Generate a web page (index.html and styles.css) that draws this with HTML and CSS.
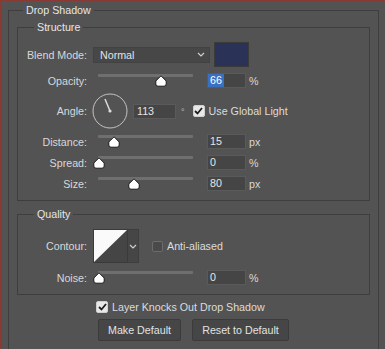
FILE: index.html
```html
<!DOCTYPE html>
<html lang="en">
<head>
    <meta charset="UTF-8">
    <meta name="viewport" content="width=device-width, initial-scale=1.0">
    <title>Layer Style - Drop Shadow</title>
    <link rel="stylesheet" href="styles.css">
</head>
<body>
    <fieldset class="grupo">
        <legend>Drop Shadow</legend>

        <fieldset class="secao estrutura">
            <legend>Structure</legend>

            <div class="linha linha-blend">
                <span class="rotulo">Blend Mode:</span>
                <div class="select">
                    <span>Normal</span>
                    <svg width="8" height="5" viewBox="0 0 8 5"><polyline points="1,1 4,4 7,1" fill="none" stroke="#cfcfcf" stroke-width="1.2"/></svg>
                </div>
                <div class="cor"></div>
            </div>

            <div class="linha linha-slider">
                <span class="rotulo">Opacity:</span>
                <div class="slider">
                    <div class="trilho"></div>
                    <svg class="pino" style="left: 62px" width="12" height="12" viewBox="0 0 12 12"><path d="M6 0.8 L11.2 6 V9 Q11.2 11.2 9 11.2 H3 Q0.8 11.2 0.8 9 V6 Z" fill="#fff" stroke="#1a1a1a"/></svg>
                </div>
                <div class="campo"><span class="selecionado">66</span></div>
                <span class="unidade">%</span>
            </div>

            <div class="linha linha-angulo">
                <span class="rotulo">Angle:</span>
                <svg class="dial" width="36" height="36" viewBox="0 0 36 36">
                    <circle cx="18" cy="18" r="17" fill="none" stroke="#c4c4c4" stroke-width="1"/>
                    <line x1="18" y1="18" x2="13" y2="6" stroke="#dcdcdc" stroke-width="1.5"/>
                    <circle cx="18" cy="18" r="1.6" fill="#dcdcdc"/>
                </svg>
                <div class="campo campo-angulo">113</div>
                <span class="grau">&deg;</span>
                <span class="check marcado">
                    <svg width="9" height="8" viewBox="0 0 9 8"><polyline points="1,4 3.5,6.5 8,1" fill="none" stroke="#1e1e1e" stroke-width="1.8"/></svg>
                </span>
                <span class="texto-check">Use Global Light</span>
            </div>

            <div class="linha linha-slider linha-distancia">
                <span class="rotulo">Distance:</span>
                <div class="slider">
                    <div class="trilho"></div>
                    <svg class="pino" style="left: 15px" width="12" height="12" viewBox="0 0 12 12"><path d="M6 0.8 L11.2 6 V9 Q11.2 11.2 9 11.2 H3 Q0.8 11.2 0.8 9 V6 Z" fill="#fff" stroke="#1a1a1a"/></svg>
                </div>
                <div class="campo">15</div>
                <span class="unidade">px</span>
            </div>

            <div class="linha linha-slider">
                <span class="rotulo">Spread:</span>
                <div class="slider">
                    <div class="trilho"></div>
                    <svg class="pino" style="left: 0px" width="12" height="12" viewBox="0 0 12 12"><path d="M6 0.8 L11.2 6 V9 Q11.2 11.2 9 11.2 H3 Q0.8 11.2 0.8 9 V6 Z" fill="#fff" stroke="#1a1a1a"/></svg>
                </div>
                <div class="campo">0</div>
                <span class="unidade">%</span>
            </div>

            <div class="linha linha-slider">
                <span class="rotulo">Size:</span>
                <div class="slider">
                    <div class="trilho"></div>
                    <svg class="pino" style="left: 35px" width="12" height="12" viewBox="0 0 12 12"><path d="M6 0.8 L11.2 6 V9 Q11.2 11.2 9 11.2 H3 Q0.8 11.2 0.8 9 V6 Z" fill="#fff" stroke="#1a1a1a"/></svg>
                </div>
                <div class="campo">80</div>
                <span class="unidade">px</span>
            </div>
        </fieldset>

        <fieldset class="secao qualidade">
            <legend>Quality</legend>

            <div class="linha linha-contorno">
                <span class="rotulo">Contour:</span>
                <svg class="contorno" width="35" height="34" viewBox="0 0 35 34">
                    <rect x="0" y="0" width="35" height="34" fill="#454545"/>
                    <polygon points="0,0 35,0 0,34" fill="#fafafa"/>
                </svg>
                <div class="contorno-menu">
                    <svg width="8" height="5" viewBox="0 0 8 5"><polyline points="1,1 4,4 7,1" fill="none" stroke="#cfcfcf" stroke-width="1.2"/></svg>
                </div>
                <span class="check"></span>
                <span class="texto-check">Anti-aliased</span>
            </div>

            <div class="linha linha-slider">
                <span class="rotulo">Noise:</span>
                <div class="slider">
                    <div class="trilho"></div>
                    <svg class="pino" style="left: 0px" width="12" height="12" viewBox="0 0 12 12"><path d="M6 0.8 L11.2 6 V9 Q11.2 11.2 9 11.2 H3 Q0.8 11.2 0.8 9 V6 Z" fill="#fff" stroke="#1a1a1a"/></svg>
                </div>
                <div class="campo">0</div>
                <span class="unidade">%</span>
            </div>
        </fieldset>

        <div class="linha-knock">
            <span class="check marcado">
                <svg width="9" height="8" viewBox="0 0 9 8"><polyline points="1,4 3.5,6.5 8,1" fill="none" stroke="#1e1e1e" stroke-width="1.8"/></svg>
            </span>
            <span class="texto-check">Layer Knocks Out Drop Shadow</span>
        </div>

        <div class="botoes">
            <button class="botao botao-make">Make Default</button>
            <button class="botao botao-reset">Reset to Default</button>
        </div>
    </fieldset>
</body>
</html>
```

FILE: styles.css
```css
*{
    margin: 0;
    padding: 0;
    box-sizing: border-box;
}
body{
    background-color: #535353;
    color: #d8d8d8;
    font-family: "Liberation Sans", Arial, sans-serif;
    font-size: 10.7px;
    height: 349px;
    overflow: hidden;
    border-top: 1px solid #8a3a35;
    border-left: 2px solid #8a3a35;
}
fieldset{
    border: 1px solid #3e3e3e;
}
legend{
    line-height: 13px;
    padding: 0 3px;
    color: #e6e6e6;
}
.grupo{
    margin: 3px 6px 0 6px;
    padding: 4px 8px 0 8px;
    height: 345px;
    border-bottom: none;
}
.grupo > legend{
    margin-left: 6px;
}
.secao{
    padding: 0 8px 6px 8px;
}
.secao > legend{
    margin-left: 8px;
}
.qualidade{
    margin-top: 7px;
}

/* linhas */
.linha{
    display: flex;
    align-items: center;
}
.rotulo{
    width: 61px;
    margin-right: 6px;
    text-align: right;
    white-space: nowrap;
}
.linha-blend{
    margin-top: 8px;
    height: 25px;
}
.linha-slider{
    height: 21px;
}
.estrutura .linha-slider{
    margin-top: 3px;
}
.estrutura .linha-distancia{
    margin-top: 2px;
}
.estrutura .linha-distancia ~ .linha-slider{
    margin-top: 0;
}
.linha-angulo{
    margin-top: 2px;
    height: 36px;
}
.linha-contorno{
    margin-top: 8px;
    height: 34px;
}
.qualidade .linha-slider{
    margin-top: 4px;
}

/* blend */
.select{
    width: 117px;
    height: 16px;
    background-color: #474747;
    border: 1px solid #424242;
    display: flex;
    align-items: center;
    justify-content: space-between;
    padding: 0 4px 0 6px;
    color: #e2e2e2;
}
.cor{
    width: 35px;
    height: 25px;
    margin-left: 4px;
    background-color: #2b3257;
    border: 1px solid #3b3b3b;
}

/* slider */
.slider{
    position: relative;
    width: 100px;
    height: 21px;
    align-self: stretch;
}
.trilho{
    margin: 4px 0 0 5px;
    height: 3px;
    background-color: #6f6f6f;
    border-radius: 1px;
}
.pino{
    position: absolute;
    top: 5px;
}
.campo{
    width: 39px;
    height: 15px;
    margin-left: 14px;
    background-color: #454545;
    border: 1px solid #5a5a5a;
    padding-left: 2px;
    line-height: 13px;
    color: #e6e6e6;
}
.selecionado{
    display: inline-block;
    background-color: #3a70c2;
    color: #fff;
    padding: 0 2px;
    margin-left: -2px;
}
.unidade{
    margin-left: 3px;
}

/* angulo */
.dial{
    margin-left: -1px;
}
.campo-angulo{
    width: 43px;
    margin-left: 5px;
    padding-left: 3px;
}
.grau{
    margin: 1px 0 0 5px;
    font-size: 9px;
    color: #bcbcbc;
}
.linha-angulo .check{
    margin-left: 8px;
}

/* checkbox */
.check{
    width: 11px;
    height: 11px;
    border: 1px solid #6c6c6c;
    background-color: #4a4a4a;
    border-radius: 2px;
    display: inline-flex;
    align-items: center;
    justify-content: center;
}
.check.marcado{
    background-color: #e8e8e8;
    border-color: #cfcfcf;
    width: 12px;
    height: 12px;
}
.texto-check{
    margin-left: 4px;
    color: #dcdcdc;
}

/* contorno */
.contorno{
    border: 1px solid #3a3a3a;
}
.contorno-menu{
    width: 11px;
    height: 34px;
    background-color: #464646;
    border: 1px solid #3e3e3e;
    border-left: none;
    display: flex;
    align-items: center;
    justify-content: center;
}
.linha-contorno .check{
    margin-left: 13px;
}

/* rodape */
.linha-knock{
    display: flex;
    align-items: center;
    margin: 5px 0 0 79px;
    height: 14px;
}
.botoes{
    display: flex;
    gap: 11px;
    margin: 5px 0 0 81px;
}
.botao{
    height: 22px;
    background-color: #464646;
    border: 1px solid #3b3b3b;
    border-radius: 2px;
    color: #e2e2e2;
    font-family: inherit;
    font-size: inherit;
}
.botao-make{
    width: 83px;
}
.botao-reset{
    width: 97px;
}
```
